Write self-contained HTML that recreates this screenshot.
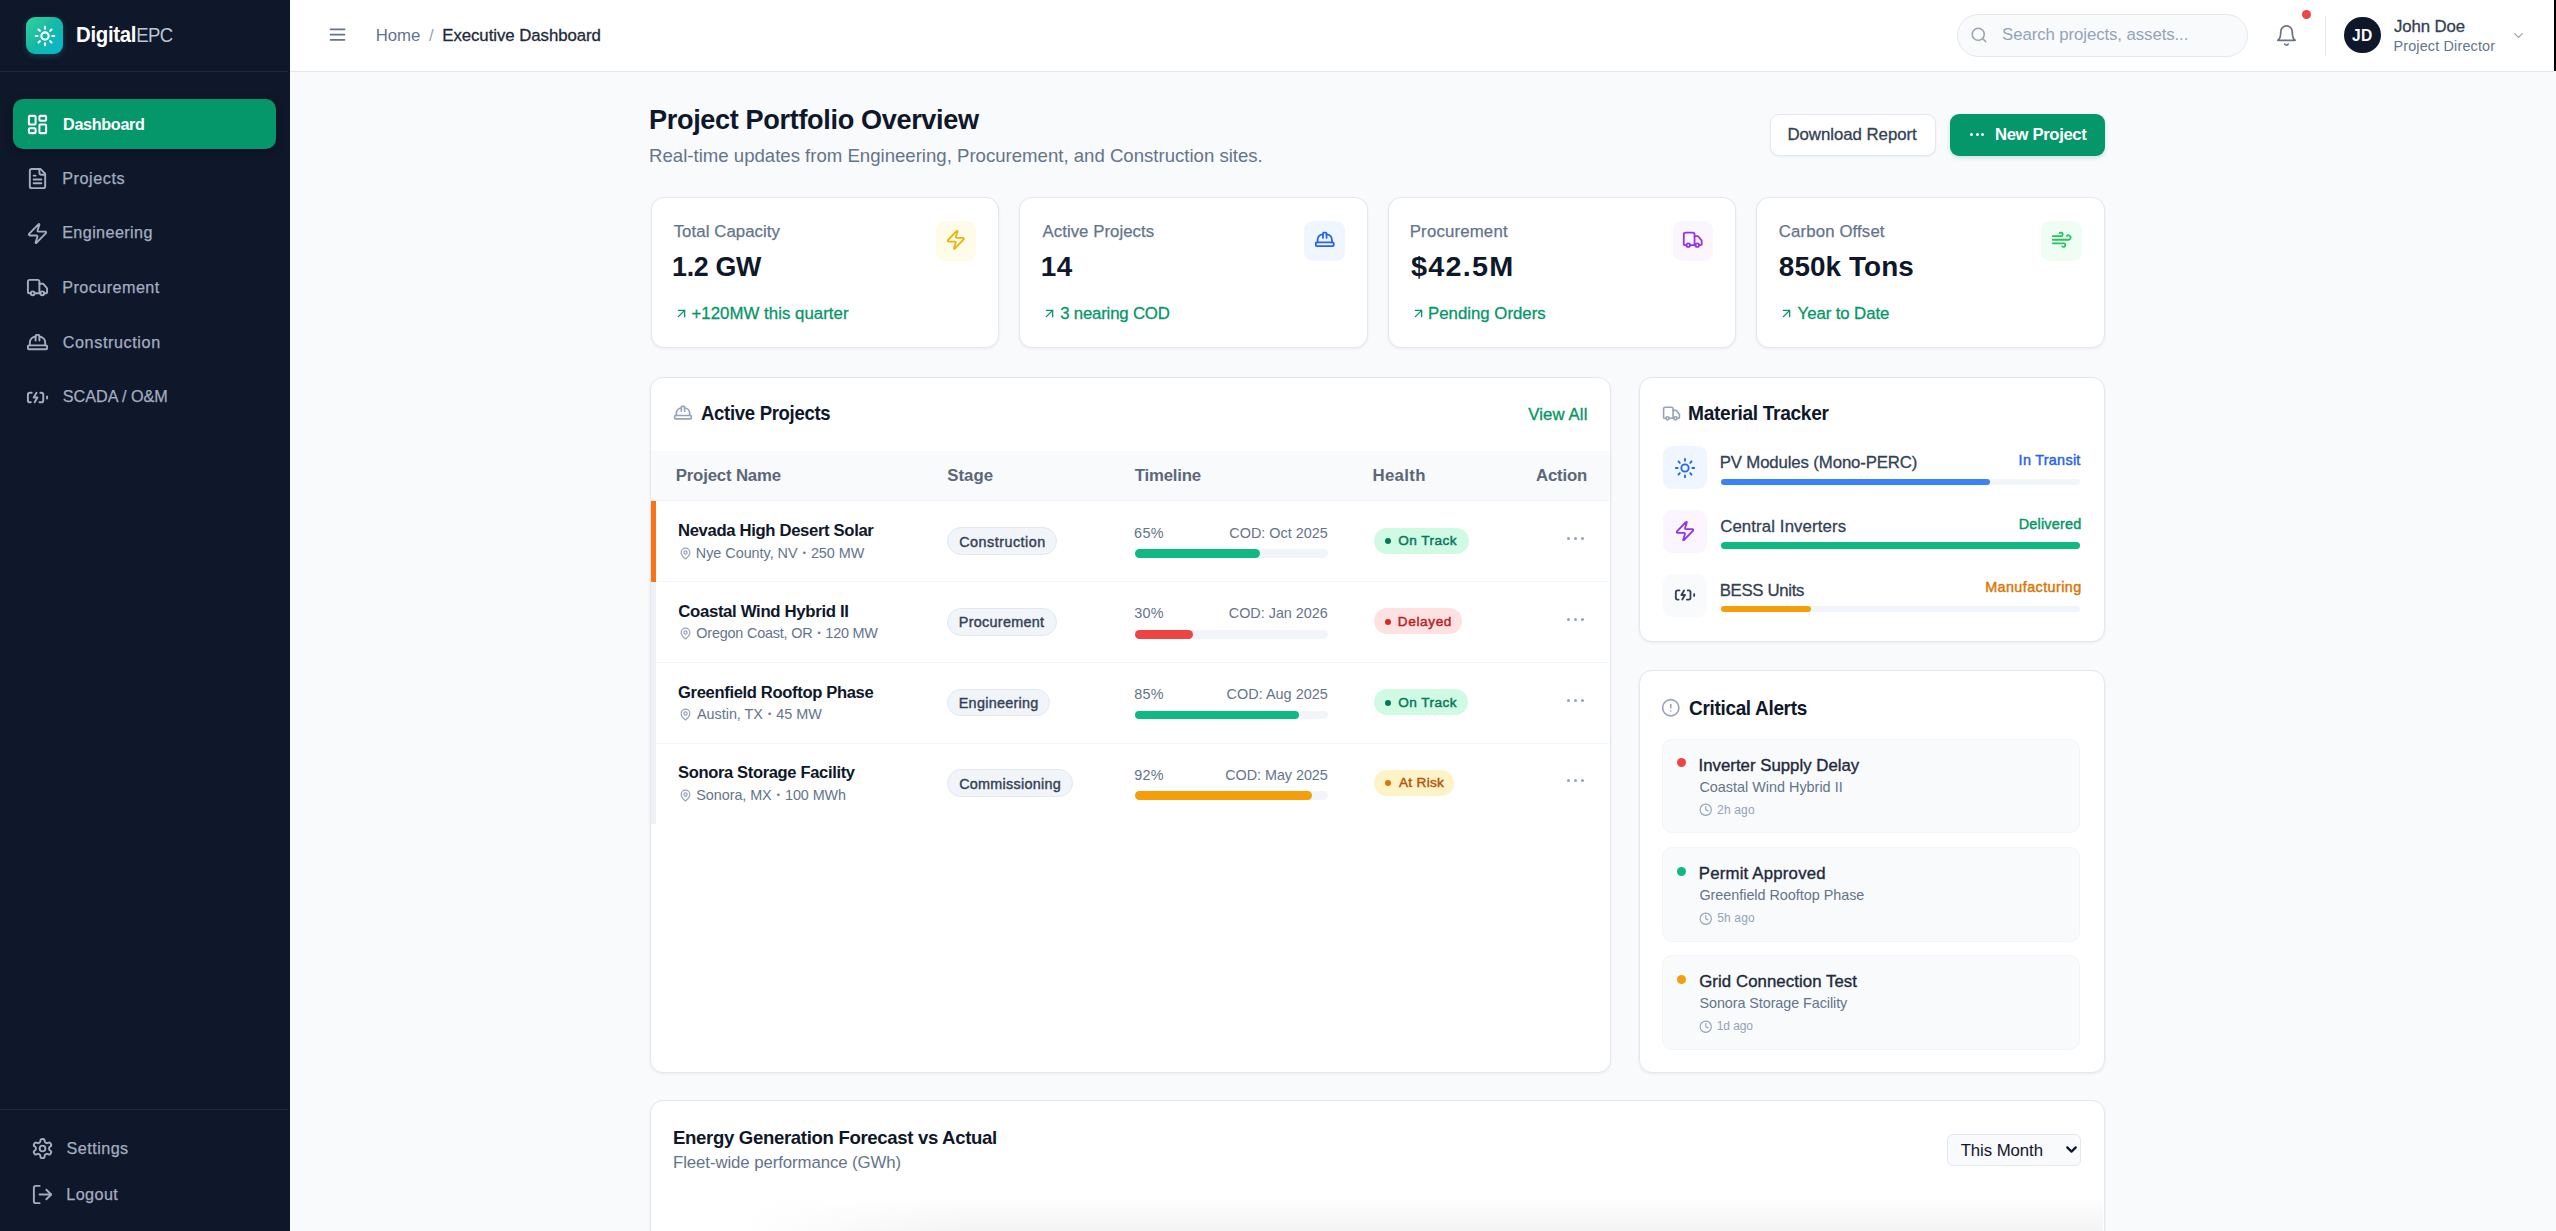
<!DOCTYPE html>
<html><head><meta charset="utf-8"><title>DigitalEPC Executive Dashboard</title>
<style>
html,body{margin:0;padding:0;}
body{width:2556px;height:1231px;overflow:hidden;position:relative;background:#f8fafc;font-family:"Liberation Sans", sans-serif;}
body>div,body>svg{position:absolute;}
.t{white-space:nowrap;line-height:1;}
</style></head><body>
<div style="left:0.00px;top:0.00px;width:290.00px;height:1231.00px;background:#0f172a"></div>
<div style="left:0.00px;top:70.50px;width:288.00px;height:1.20px;background:#1e293b"></div>
<div style="left:0.00px;top:1108.50px;width:288.00px;height:1.20px;background:#1e293b"></div>
<div style="left:26.00px;top:17.00px;width:37.00px;height:36.50px;border-radius:9px;background:linear-gradient(135deg,#34d399 0%,#14b8a6 50%,#06b6d4 100%);box-shadow:0 2px 6px rgba(20,184,166,0.25)"></div>
<svg style="left:33.50px;top:24.50px;width:22.00px;height:22.00px" viewBox="0 0 24 24" fill="none" stroke="#ffffff" stroke-width="2.3" stroke-linecap="round" stroke-linejoin="round"><circle cx="12" cy="12" r="4"/><path d="M12 2v2"/><path d="M12 20v2"/><path d="m4.93 4.93 1.41 1.41"/><path d="m17.66 17.66 1.41 1.41"/><path d="M2 12h2"/><path d="M20 12h2"/><path d="m6.34 17.66-1.41 1.41"/><path d="m19.07 4.93-1.41 1.41"/></svg>
<div class="t" style="left:75.88px;top:24px;font-size:21.90px;letter-spacing:-0.350px;color:#ffffff;font-weight:700;transform:scaleX(0.9313);transform-origin:1.42px 0;">Digital</div>
<div class="t" style="left:135.62px;top:24px;font-size:21.00px;letter-spacing:-0.600px;color:#bcc6d5;transform:scaleX(0.8827);transform-origin:1.68px 0;">EPC</div>
<div style="left:12.50px;top:99.00px;width:263.50px;height:50.00px;border-radius:10px;background:#059669;box-shadow:0 3px 8px rgba(0,0,0,0.25)"></div>
<svg style="left:26.00px;top:112.50px;width:23.00px;height:23.00px" viewBox="0 0 24 24" fill="none" stroke="#ffffff" stroke-width="2.1" stroke-linecap="round" stroke-linejoin="round"><rect x="3" y="3" width="7" height="9" rx="1"/><rect x="14" y="3" width="7" height="5" rx="1"/><rect x="14" y="12" width="7" height="9" rx="1"/><rect x="3" y="16" width="7" height="5" rx="1"/></svg>
<div class="t" style="left:62.71px;top:117px;font-size:16.80px;letter-spacing:-0.350px;color:#ffffff;font-weight:700;transform:scaleX(0.9648);transform-origin:1.09px 0;">Dashboard</div>
<svg style="left:26.00px;top:167.40px;width:23.00px;height:23.00px" viewBox="0 0 24 24" fill="none" stroke="#a3aec0" stroke-width="2" stroke-linecap="round" stroke-linejoin="round"><path d="M15 2H6a2 2 0 0 0-2 2v16a2 2 0 0 0 2 2h12a2 2 0 0 0 2-2V7Z"/><path d="M14 2v4a2 2 0 0 0 2 2h4"/><path d="M10 9H8"/><path d="M16 13H8"/><path d="M16 17H8"/></svg>
<div class="t" style="left:62.20px;top:170px;font-size:16.20px;letter-spacing:0.569px;color:#a3aec0;-webkit-text-stroke:0.25px #a3aec0">Projects</div>
<svg style="left:26.00px;top:221.90px;width:23.00px;height:23.00px" viewBox="0 0 24 24" fill="none" stroke="#a3aec0" stroke-width="2" stroke-linecap="round" stroke-linejoin="round"><path d="M4 14a1 1 0 0 1-.78-1.63l9.9-10.2a.5.5 0 0 1 .86.46l-1.92 6.02A1 1 0 0 0 13 10h7a1 1 0 0 1 .78 1.63l-9.9 10.2a.5.5 0 0 1-.86-.46l1.92-6.02A1 1 0 0 0 11 14z"/></svg>
<div class="t" style="left:62.20px;top:224px;font-size:16.20px;letter-spacing:0.382px;color:#a3aec0;-webkit-text-stroke:0.25px #a3aec0">Engineering</div>
<svg style="left:26.00px;top:276.40px;width:23.00px;height:23.00px" viewBox="0 0 24 24" fill="none" stroke="#a3aec0" stroke-width="2" stroke-linecap="round" stroke-linejoin="round"><path d="M14 18V6a2 2 0 0 0-2-2H4a2 2 0 0 0-2 2v11a1 1 0 0 0 1 1h2"/><path d="M15 18H9"/><path d="M19 18h2a1 1 0 0 0 1-1v-3.65a1 1 0 0 0-.22-.624l-3.48-4.35A1 1 0 0 0 17.52 8H14"/><circle cx="17" cy="18" r="2"/><circle cx="7" cy="18" r="2"/></svg>
<div class="t" style="left:62.20px;top:279px;font-size:16.20px;letter-spacing:0.441px;color:#a3aec0;-webkit-text-stroke:0.25px #a3aec0">Procurement</div>
<svg style="left:26.00px;top:331.00px;width:23.00px;height:23.00px" viewBox="0 0 24 24" fill="none" stroke="#a3aec0" stroke-width="2" stroke-linecap="round" stroke-linejoin="round"><path d="M10 10V5a1 1 0 0 1 1-1h2a1 1 0 0 1 1 1v5"/><path d="M14 6a6 6 0 0 1 6 6v3"/><path d="M4 15v-3a6 6 0 0 1 6-6"/><rect x="2" y="15" width="20" height="4" rx="1"/></svg>
<div class="t" style="left:62.69px;top:334px;font-size:16.20px;letter-spacing:0.600px;color:#a3aec0;-webkit-text-stroke:0.25px #a3aec0">Construction</div>
<svg style="left:26.00px;top:385.50px;width:23.00px;height:23.00px" viewBox="0 0 24 24" fill="none" stroke="#a3aec0" stroke-width="2" stroke-linecap="round" stroke-linejoin="round"><path d="M15 7h1a2 2 0 0 1 2 2v6a2 2 0 0 1-2 2h-2"/><path d="M6 7H4a2 2 0 0 0-2 2v6a2 2 0 0 0 2 2h1"/><path d="m11 7-3 5h4l-3 5"/><line x1="22" x2="22" y1="11" y2="13"/></svg>
<div class="t" style="left:62.77px;top:388px;font-size:16.20px;letter-spacing:-0.018px;color:#a3aec0;-webkit-text-stroke:0.25px #a3aec0">SCADA / O&amp;M</div>
<svg style="left:30.50px;top:1137.00px;width:23.00px;height:23.00px" viewBox="0 0 24 24" fill="none" stroke="#a3aec0" stroke-width="2" stroke-linecap="round" stroke-linejoin="round"><path d="M12.22 2h-.44a2 2 0 0 0-2 2v.18a2 2 0 0 1-1 1.73l-.43.25a2 2 0 0 1-2 0l-.15-.08a2 2 0 0 0-2.73.73l-.22.38a2 2 0 0 0 .73 2.73l.15.1a2 2 0 0 1 1 1.72v.51a2 2 0 0 1-1 1.74l-.15.09a2 2 0 0 0-.73 2.73l.22.38a2 2 0 0 0 2.73.73l.15-.08a2 2 0 0 1 2 0l.43.25a2 2 0 0 1 1 1.73V20a2 2 0 0 0 2 2h.44a2 2 0 0 0 2-2v-.18a2 2 0 0 1 1-1.73l.43-.25a2 2 0 0 1 2 0l.15.08a2 2 0 0 0 2.73-.73l.22-.39a2 2 0 0 0-.73-2.73l-.15-.08a2 2 0 0 1-1-1.74v-.5a2 2 0 0 1 1-1.74l.15-.09a2 2 0 0 0 .73-2.73l-.22-.38a2 2 0 0 0-2.73-.73l-.15.08a2 2 0 0 1-2 0l-.43-.25a2 2 0 0 1-1-1.73V4a2 2 0 0 0-2-2z"/><circle cx="12" cy="12" r="3"/></svg>
<div class="t" style="left:66.57px;top:1140px;font-size:16.20px;letter-spacing:0.448px;color:#a3aec0;-webkit-text-stroke:0.25px #a3aec0">Settings</div>
<svg style="left:31.00px;top:1182.50px;width:23.00px;height:23.00px" viewBox="0 0 24 24" fill="none" stroke="#a3aec0" stroke-width="2" stroke-linecap="round" stroke-linejoin="round"><path d="M9 21H5a2 2 0 0 1-2-2V5a2 2 0 0 1 2-2h4"/><polyline points="16 17 21 12 16 7"/><line x1="21" x2="9" y1="12" y2="12"/></svg>
<div class="t" style="left:66.30px;top:1186px;font-size:16.20px;letter-spacing:0.397px;color:#a3aec0;-webkit-text-stroke:0.25px #a3aec0">Logout</div>
<div style="left:290.00px;top:0.00px;width:2266.00px;height:70.50px;background:#ffffff"></div>
<div style="left:290.00px;top:70.50px;width:2264.00px;height:1.30px;background:#e5e7eb"></div>
<div style="left:2553.50px;top:0.00px;width:2.50px;height:71.00px;background:#000"></div>
<svg style="left:326.50px;top:24.00px;width:21.00px;height:21.00px" viewBox="0 0 24 24" fill="none" stroke="#64748b" stroke-width="2" stroke-linecap="round" stroke-linejoin="round"><line x1="4" x2="20" y1="6" y2="6"/><line x1="4" x2="20" y1="12" y2="12"/><line x1="4" x2="20" y1="18" y2="18"/></svg>
<div class="t" style="left:375.66px;top:28px;font-size:16.80px;letter-spacing:-0.024px;color:#64748b;">Home</div>
<div class="t" style="left:429.00px;top:28px;font-size:16.80px;letter-spacing:0.000px;color:#94a3b8;">/</div>
<div class="t" style="left:442.26px;top:28px;font-size:16.80px;letter-spacing:-0.047px;color:#1e293b;-webkit-text-stroke:0.3px #1e293b">Executive Dashboard</div>
<div style="left:1956.50px;top:13.80px;width:291.00px;height:42.80px;border-radius:22px;background:#f8fafc;border:1.3px solid #e5e7eb;box-sizing:border-box"></div>
<svg style="left:1970.00px;top:25.80px;width:18.00px;height:18.00px" viewBox="0 0 24 24" fill="none" stroke="#9ca3af" stroke-width="2.1" stroke-linecap="round" stroke-linejoin="round"><circle cx="11" cy="11" r="8"/><path d="m21 21-4.3-4.3"/></svg>
<div class="t" style="left:2002.04px;top:27px;font-size:16.80px;letter-spacing:-0.084px;color:#94a3b8;">Search projects, assets...</div>
<svg style="left:2274.50px;top:24.00px;width:23.00px;height:23.00px" viewBox="0 0 24 24" fill="none" stroke="#6b7280" stroke-width="1.8" stroke-linecap="round" stroke-linejoin="round"><path d="M6 8a6 6 0 0 1 12 0c0 7 3 9 3 9H3s3-2 3-9"/><path d="M10.3 21a1.94 1.94 0 0 0 3.4 0"/></svg>
<div style="left:2302.00px;top:10.20px;width:9.00px;height:9.00px;border-radius:50%;background:#ef4444;box-shadow:0 0 0 1.5px #fff"></div>
<div style="left:2325.00px;top:16.00px;width:1.20px;height:39.50px;background:#e5e7eb"></div>
<div style="left:2344.00px;top:16.80px;width:36.50px;height:36.50px;border-radius:50%;background:#0f172a"></div>
<div class="t" style="left:2352.07px;top:28px;font-size:15.60px;letter-spacing:0.268px;color:#ffffff;font-weight:700;">JD</div>
<div class="t" style="left:2393.95px;top:19px;font-size:16.80px;letter-spacing:-0.114px;color:#334155;-webkit-text-stroke:0.3px #334155">John Doe</div>
<div class="t" style="left:2393.45px;top:39px;font-size:14.40px;letter-spacing:0.163px;color:#64748b;">Project Director</div>
<svg style="left:2511.00px;top:28.00px;width:15.00px;height:15.00px" viewBox="0 0 24 24" fill="none" stroke="#9ca3af" stroke-width="2" stroke-linecap="round" stroke-linejoin="round"><path d="m6 9 6 6 6-6"/></svg>
<div class="t" style="left:649.23px;top:106px;font-size:27.20px;letter-spacing:-0.350px;color:#0f172a;font-weight:700;transform:scaleX(0.9966);transform-origin:1.77px 0;">Project Portfolio Overview</div>
<div class="t" style="left:649.11px;top:147px;font-size:18.60px;letter-spacing:-0.003px;color:#64748b;">Real-time updates from Engineering, Procurement, and Construction sites.</div>
<div style="left:1770.00px;top:113.80px;width:165.50px;height:42.40px;border-radius:9px;background:#fff;border:1.3px solid #e2e8f0;box-sizing:border-box;box-shadow:0 1px 2px rgba(0,0,0,0.05)"></div>
<div class="t" style="left:1787.46px;top:127px;font-size:16.80px;letter-spacing:-0.025px;color:#334155;-webkit-text-stroke:0.3px #334155">Download Report</div>
<div style="left:1949.80px;top:113.80px;width:155.60px;height:42.40px;border-radius:9px;background:#059669;box-shadow:0 2px 4px rgba(5,150,105,0.2)"></div>
<div style="left:1970.00px;top:133.30px;width:3.00px;height:3.00px;border-radius:50%;background:#fff"></div>
<div style="left:1975.50px;top:133.30px;width:3.00px;height:3.00px;border-radius:50%;background:#fff"></div>
<div style="left:1981.00px;top:133.30px;width:3.00px;height:3.00px;border-radius:50%;background:#fff"></div>
<div class="t" style="left:1994.91px;top:127px;font-size:16.80px;letter-spacing:-0.350px;color:#ffffff;font-weight:700;transform:scaleX(0.9919);transform-origin:1.09px 0;">New Project</div>
<div style="left:650.70px;top:196.60px;width:348.80px;height:151.80px;border-radius:13px;background:#fff;border:1.3px solid #e5e7eb;box-sizing:border-box;box-shadow:0 1px 3px rgba(15,23,42,0.06)"></div>
<div class="t" style="left:673.66px;top:224px;font-size:16.80px;letter-spacing:0.072px;color:#64748b;-webkit-text-stroke:0.25px #64748b">Total Capacity</div>
<div class="t" style="left:672.33px;top:253px;font-size:27.90px;letter-spacing:-0.350px;color:#0f172a;font-weight:700;transform:scaleX(0.9610);transform-origin:1.67px 0;">1.2 GW</div>
<svg style="left:673.70px;top:306.00px;width:15.00px;height:15.00px" viewBox="0 0 24 24" fill="none" stroke="#059669" stroke-width="2.2" stroke-linecap="round" stroke-linejoin="round"><path d="M7 7h10v10"/><path d="M7 17 17 7"/></svg>
<div class="t" style="left:691.46px;top:306px;font-size:16.80px;letter-spacing:0.048px;color:#059669;-webkit-text-stroke:0.3px #059669">+120MW this quarter</div>
<div style="left:935.70px;top:221.20px;width:40.50px;height:39.50px;border-radius:9px;background:#fefce8"></div>
<svg style="left:945.20px;top:229.30px;width:21.50px;height:21.50px" viewBox="0 0 24 24" fill="none" stroke="#eab308" stroke-width="2" stroke-linecap="round" stroke-linejoin="round"><path d="M4 14a1 1 0 0 1-.78-1.63l9.9-10.2a.5.5 0 0 1 .86.46l-1.92 6.02A1 1 0 0 0 13 10h7a1 1 0 0 1 .78 1.63l-9.9 10.2a.5.5 0 0 1-.86-.46l1.92-6.02A1 1 0 0 0 11 14z"/></svg>
<div style="left:1019.20px;top:196.60px;width:348.70px;height:151.80px;border-radius:13px;background:#fff;border:1.3px solid #e5e7eb;box-sizing:border-box;box-shadow:0 1px 3px rgba(15,23,42,0.06)"></div>
<div class="t" style="left:1042.50px;top:224px;font-size:16.80px;letter-spacing:0.047px;color:#64748b;-webkit-text-stroke:0.25px #64748b">Active Projects</div>
<div class="t" style="left:1040.83px;top:253px;font-size:27.90px;letter-spacing:0.345px;color:#0f172a;font-weight:700;">14</div>
<svg style="left:1042.20px;top:306.00px;width:15.00px;height:15.00px" viewBox="0 0 24 24" fill="none" stroke="#059669" stroke-width="2.2" stroke-linecap="round" stroke-linejoin="round"><path d="M7 7h10v10"/><path d="M7 17 17 7"/></svg>
<div class="t" style="left:1060.13px;top:306px;font-size:16.80px;letter-spacing:-0.186px;color:#059669;-webkit-text-stroke:0.3px #059669">3 nearing COD</div>
<div style="left:1304.20px;top:221.20px;width:40.50px;height:39.50px;border-radius:9px;background:#eff6ff"></div>
<svg style="left:1313.70px;top:229.30px;width:21.50px;height:21.50px" viewBox="0 0 24 24" fill="none" stroke="#2563eb" stroke-width="2" stroke-linecap="round" stroke-linejoin="round"><path d="M10 10V5a1 1 0 0 1 1-1h2a1 1 0 0 1 1 1v5"/><path d="M14 6a6 6 0 0 1 6 6v3"/><path d="M4 15v-3a6 6 0 0 1 6-6"/><rect x="2" y="15" width="20" height="4" rx="1"/></svg>
<div style="left:1387.80px;top:196.60px;width:348.40px;height:151.80px;border-radius:13px;background:#fff;border:1.3px solid #e5e7eb;box-sizing:border-box;box-shadow:0 1px 3px rgba(15,23,42,0.06)"></div>
<div class="t" style="left:1409.76px;top:224px;font-size:16.80px;letter-spacing:0.173px;color:#64748b;-webkit-text-stroke:0.25px #64748b">Procurement</div>
<div class="t" style="left:1410.68px;top:253px;font-size:27.90px;letter-spacing:1.200px;color:#0f172a;font-weight:700;transform:scaleX(1.0329);transform-origin:0.42px 0;">$42.5M</div>
<svg style="left:1410.80px;top:306.00px;width:15.00px;height:15.00px" viewBox="0 0 24 24" fill="none" stroke="#059669" stroke-width="2.2" stroke-linecap="round" stroke-linejoin="round"><path d="M7 7h10v10"/><path d="M7 17 17 7"/></svg>
<div class="t" style="left:1428.06px;top:306px;font-size:16.80px;letter-spacing:0.004px;color:#059669;-webkit-text-stroke:0.3px #059669">Pending Orders</div>
<div style="left:1672.80px;top:221.20px;width:40.50px;height:39.50px;border-radius:9px;background:#faf5ff"></div>
<svg style="left:1682.30px;top:229.30px;width:21.50px;height:21.50px" viewBox="0 0 24 24" fill="none" stroke="#9333ea" stroke-width="2" stroke-linecap="round" stroke-linejoin="round"><path d="M14 18V6a2 2 0 0 0-2-2H4a2 2 0 0 0-2 2v11a1 1 0 0 0 1 1h2"/><path d="M15 18H9"/><path d="M19 18h2a1 1 0 0 0 1-1v-3.65a1 1 0 0 0-.22-.624l-3.48-4.35A1 1 0 0 0 17.52 8H14"/><circle cx="17" cy="18" r="2"/><circle cx="7" cy="18" r="2"/></svg>
<div style="left:1756.40px;top:196.60px;width:348.20px;height:151.80px;border-radius:13px;background:#fff;border:1.3px solid #e5e7eb;box-sizing:border-box;box-shadow:0 1px 3px rgba(15,23,42,0.06)"></div>
<div class="t" style="left:1778.86px;top:224px;font-size:16.80px;letter-spacing:0.123px;color:#64748b;-webkit-text-stroke:0.25px #64748b">Carbon Offset</div>
<div class="t" style="left:1778.86px;top:253px;font-size:27.90px;letter-spacing:0.077px;color:#0f172a;font-weight:700;">850k Tons</div>
<svg style="left:1779.40px;top:306.00px;width:15.00px;height:15.00px" viewBox="0 0 24 24" fill="none" stroke="#059669" stroke-width="2.2" stroke-linecap="round" stroke-linejoin="round"><path d="M7 7h10v10"/><path d="M7 17 17 7"/></svg>
<div class="t" style="left:1797.58px;top:306px;font-size:16.80px;letter-spacing:-0.087px;color:#059669;-webkit-text-stroke:0.3px #059669">Year to Date</div>
<div style="left:2041.40px;top:221.20px;width:40.50px;height:39.50px;border-radius:9px;background:#f0fdf4"></div>
<svg style="left:2050.90px;top:229.30px;width:21.50px;height:21.50px" viewBox="0 0 24 24" fill="none" stroke="#22c55e" stroke-width="2" stroke-linecap="round" stroke-linejoin="round"><path d="M17.7 7.7a2.5 2.5 0 1 1 1.8 4.3H2"/><path d="M9.6 4.6A2 2 0 1 1 11 8H2"/><path d="M12.6 19.4A2 2 0 1 0 14 16H2"/></svg>
<div style="left:650.00px;top:376.60px;width:960.80px;height:696.00px;border-radius:13px;background:#fff;border:1.3px solid #e5e7eb;box-sizing:border-box;box-shadow:0 1px 3px rgba(15,23,42,0.06)"></div>
<svg style="left:673.00px;top:402.50px;width:20.00px;height:20.00px" viewBox="0 0 24 24" fill="none" stroke="#94a3b8" stroke-width="2" stroke-linecap="round" stroke-linejoin="round"><path d="M10 10V5a1 1 0 0 1 1-1h2a1 1 0 0 1 1 1v5"/><path d="M14 6a6 6 0 0 1 6 6v3"/><path d="M4 15v-3a6 6 0 0 1 6-6"/><rect x="2" y="15" width="20" height="4" rx="1"/></svg>
<div class="t" style="left:700.79px;top:403px;font-size:20.40px;letter-spacing:-0.350px;color:#0f172a;font-weight:700;transform:scaleX(0.9096);transform-origin:0.51px 0;">Active Projects</div>
<div class="t" style="left:1528.22px;top:407px;font-size:16.80px;letter-spacing:0.102px;color:#059669;-webkit-text-stroke:0.35px #059669">View All</div>
<div style="left:651.30px;top:450.60px;width:958.20px;height:50.40px;background:#f8fafc;border-bottom:1.2px solid #eef2f6;box-sizing:border-box"></div>
<div class="t" style="left:675.71px;top:468px;font-size:16.80px;letter-spacing:-0.170px;color:#5b6779;font-weight:700;">Project Name</div>
<div class="t" style="left:947.20px;top:468px;font-size:16.80px;letter-spacing:0.049px;color:#5b6779;font-weight:700;">Stage</div>
<div class="t" style="left:1134.83px;top:468px;font-size:16.80px;letter-spacing:-0.219px;color:#5b6779;font-weight:700;">Timeline</div>
<div class="t" style="left:1372.51px;top:468px;font-size:16.80px;letter-spacing:0.335px;color:#5b6779;font-weight:700;">Health</div>
<div class="t" style="left:1535.98px;top:468px;font-size:16.80px;letter-spacing:-0.184px;color:#5b6779;font-weight:700;">Action</div>
<div style="left:651.30px;top:581.10px;width:958.20px;height:1.20px;background:#f1f5f9"></div>
<div style="left:651.30px;top:501.00px;width:5.00px;height:80.70px;background:#f97316"></div>
<div class="t" style="left:677.81px;top:523px;font-size:16.80px;letter-spacing:-0.350px;color:#0f172a;font-weight:700;transform:scaleX(0.9935);transform-origin:1.09px 0;">Nevada High Desert Solar</div>
<svg style="left:679.00px;top:546.50px;width:13.00px;height:13.00px" viewBox="0 0 24 24" fill="none" stroke="#94a3b8" stroke-width="2.2" stroke-linecap="round" stroke-linejoin="round"><path d="M20 10c0 4.993-5.539 10.193-7.399 11.799a1 1 0 0 1-1.202 0C9.539 20.193 4 14.993 4 10a8 8 0 0 1 16 0"/><circle cx="12" cy="10" r="3"/></svg>
<div class="t" style="left:695.85px;top:546px;font-size:14.40px;letter-spacing:-0.033px;color:#64748b;">Nye County, NV <span style="font-size:62%;position:relative;top:-2px;margin:0 1.2px">•</span> 250 MW</div>
<div style="left:946.90px;top:527.30px;width:110.10px;height:27.80px;border-radius:14px;background:#f1f5f9;border:1.2px solid #e2e8f0;box-sizing:border-box"></div>
<div class="t" style="left:959.18px;top:535px;font-size:14.40px;letter-spacing:0.482px;color:#334155;-webkit-text-stroke:0.4px #334155">Construction</div>
<div class="t" style="left:1134.08px;top:526px;font-size:14.40px;letter-spacing:0.312px;color:#64748b;">65%</div>
<div class="t" style="left:1229.28px;top:526px;font-size:14.40px;letter-spacing:0.014px;color:#64748b;">COD: Oct 2025</div>
<div style="left:1134.60px;top:549.20px;width:193.20px;height:8.70px;border-radius:5px;background:#f1f5f9"></div>
<div style="left:1134.60px;top:549.20px;width:125.58px;height:8.70px;border-radius:5px;background:#10b981"></div>
<div style="left:1373.60px;top:527.60px;width:95.00px;height:26.10px;border-radius:13px;background:#d1fae5"></div>
<div style="left:1384.80px;top:538.10px;width:6.30px;height:6.30px;border-radius:50%;background:#047857"></div>
<div class="t" style="left:1398.29px;top:534px;font-size:13.60px;letter-spacing:0.452px;color:#047857;-webkit-text-stroke:0.45px #047857">On Track</div>
<div style="left:1567.00px;top:537.20px;width:3.00px;height:3.00px;border-radius:50%;background:#94a3b8"></div>
<div style="left:1574.00px;top:537.20px;width:3.00px;height:3.00px;border-radius:50%;background:#94a3b8"></div>
<div style="left:1581.00px;top:537.20px;width:3.00px;height:3.00px;border-radius:50%;background:#94a3b8"></div>
<div style="left:651.30px;top:661.80px;width:958.20px;height:1.20px;background:#f1f5f9"></div>
<div style="left:651.30px;top:581.70px;width:5.00px;height:80.70px;background:#eef2f7"></div>
<div class="t" style="left:678.23px;top:604px;font-size:16.80px;letter-spacing:-0.344px;color:#0f172a;font-weight:700;">Coastal Wind Hybrid II</div>
<svg style="left:679.00px;top:627.20px;width:13.00px;height:13.00px" viewBox="0 0 24 24" fill="none" stroke="#94a3b8" stroke-width="2.2" stroke-linecap="round" stroke-linejoin="round"><path d="M20 10c0 4.993-5.539 10.193-7.399 11.799a1 1 0 0 1-1.202 0C9.539 20.193 4 14.993 4 10a8 8 0 0 1 16 0"/><circle cx="12" cy="10" r="3"/></svg>
<div class="t" style="left:696.35px;top:626px;font-size:14.40px;letter-spacing:-0.195px;color:#64748b;">Oregon Coast, OR <span style="font-size:62%;position:relative;top:-2px;margin:0 1.2px">•</span> 120 MW</div>
<div style="left:946.90px;top:608.00px;width:110.20px;height:27.80px;border-radius:14px;background:#f1f5f9;border:1.2px solid #e2e8f0;box-sizing:border-box"></div>
<div class="t" style="left:958.75px;top:615px;font-size:14.40px;letter-spacing:0.296px;color:#334155;-webkit-text-stroke:0.4px #334155">Procurement</div>
<div class="t" style="left:1134.22px;top:606px;font-size:14.40px;letter-spacing:0.240px;color:#64748b;">30%</div>
<div class="t" style="left:1228.78px;top:606px;font-size:14.40px;letter-spacing:-0.010px;color:#64748b;">COD: Jan 2026</div>
<div style="left:1134.60px;top:629.90px;width:193.20px;height:8.70px;border-radius:5px;background:#f1f5f9"></div>
<div style="left:1134.60px;top:629.90px;width:57.96px;height:8.70px;border-radius:5px;background:#ef4444"></div>
<div style="left:1373.60px;top:608.30px;width:88.50px;height:26.10px;border-radius:13px;background:#fee2e2"></div>
<div style="left:1384.80px;top:618.80px;width:6.30px;height:6.30px;border-radius:50%;background:#dc2626"></div>
<div class="t" style="left:1397.81px;top:615px;font-size:13.60px;letter-spacing:0.627px;color:#b91c1c;-webkit-text-stroke:0.45px #b91c1c">Delayed</div>
<div style="left:1567.00px;top:617.90px;width:3.00px;height:3.00px;border-radius:50%;background:#94a3b8"></div>
<div style="left:1574.00px;top:617.90px;width:3.00px;height:3.00px;border-radius:50%;background:#94a3b8"></div>
<div style="left:1581.00px;top:617.90px;width:3.00px;height:3.00px;border-radius:50%;background:#94a3b8"></div>
<div style="left:651.30px;top:742.50px;width:958.20px;height:1.20px;background:#f1f5f9"></div>
<div style="left:651.30px;top:662.40px;width:5.00px;height:80.70px;background:#eef2f7"></div>
<div class="t" style="left:678.23px;top:685px;font-size:16.80px;letter-spacing:-0.350px;color:#0f172a;font-weight:700;transform:scaleX(0.9884);transform-origin:0.67px 0;">Greenfield Rooftop Phase</div>
<svg style="left:679.00px;top:707.90px;width:13.00px;height:13.00px" viewBox="0 0 24 24" fill="none" stroke="#94a3b8" stroke-width="2.2" stroke-linecap="round" stroke-linejoin="round"><path d="M20 10c0 4.993-5.539 10.193-7.399 11.799a1 1 0 0 1-1.202 0C9.539 20.193 4 14.993 4 10a8 8 0 0 1 16 0"/><circle cx="12" cy="10" r="3"/></svg>
<div class="t" style="left:697.00px;top:707px;font-size:14.40px;letter-spacing:-0.022px;color:#64748b;">Austin, TX <span style="font-size:62%;position:relative;top:-2px;margin:0 1.2px">•</span> 45 MW</div>
<div style="left:946.90px;top:688.70px;width:103.30px;height:27.80px;border-radius:14px;background:#f1f5f9;border:1.2px solid #e2e8f0;box-sizing:border-box"></div>
<div class="t" style="left:958.75px;top:696px;font-size:14.40px;letter-spacing:0.276px;color:#334155;-webkit-text-stroke:0.4px #334155">Engineering</div>
<div class="t" style="left:1134.15px;top:687px;font-size:14.40px;letter-spacing:0.276px;color:#64748b;">85%</div>
<div class="t" style="left:1226.58px;top:687px;font-size:14.40px;letter-spacing:0.035px;color:#64748b;">COD: Aug 2025</div>
<div style="left:1134.60px;top:710.60px;width:193.20px;height:8.70px;border-radius:5px;background:#f1f5f9"></div>
<div style="left:1134.60px;top:710.60px;width:164.22px;height:8.70px;border-radius:5px;background:#10b981"></div>
<div style="left:1373.60px;top:689.00px;width:94.00px;height:26.10px;border-radius:13px;background:#d1fae5"></div>
<div style="left:1384.80px;top:699.50px;width:6.30px;height:6.30px;border-radius:50%;background:#047857"></div>
<div class="t" style="left:1398.29px;top:696px;font-size:13.60px;letter-spacing:0.452px;color:#047857;-webkit-text-stroke:0.45px #047857">On Track</div>
<div style="left:1567.00px;top:698.60px;width:3.00px;height:3.00px;border-radius:50%;background:#94a3b8"></div>
<div style="left:1574.00px;top:698.60px;width:3.00px;height:3.00px;border-radius:50%;background:#94a3b8"></div>
<div style="left:1581.00px;top:698.60px;width:3.00px;height:3.00px;border-radius:50%;background:#94a3b8"></div>
<div style="left:651.30px;top:743.10px;width:5.00px;height:80.70px;background:#eef2f7"></div>
<div class="t" style="left:678.40px;top:765px;font-size:16.80px;letter-spacing:-0.350px;color:#0f172a;font-weight:700;transform:scaleX(0.9846);transform-origin:0.50px 0;">Sonora Storage Facility</div>
<svg style="left:679.00px;top:788.60px;width:13.00px;height:13.00px" viewBox="0 0 24 24" fill="none" stroke="#94a3b8" stroke-width="2.2" stroke-linecap="round" stroke-linejoin="round"><path d="M20 10c0 4.993-5.539 10.193-7.399 11.799a1 1 0 0 1-1.202 0C9.539 20.193 4 14.993 4 10a8 8 0 0 1 16 0"/><circle cx="12" cy="10" r="3"/></svg>
<div class="t" style="left:696.35px;top:788px;font-size:14.40px;letter-spacing:-0.069px;color:#64748b;">Sonora, MX <span style="font-size:62%;position:relative;top:-2px;margin:0 1.2px">•</span> 100 MWh</div>
<div style="left:946.90px;top:769.40px;width:126.10px;height:27.80px;border-radius:14px;background:#f1f5f9;border:1.2px solid #e2e8f0;box-sizing:border-box"></div>
<div class="t" style="left:959.18px;top:777px;font-size:14.40px;letter-spacing:0.269px;color:#334155;-webkit-text-stroke:0.4px #334155">Commissioning</div>
<div class="t" style="left:1134.15px;top:768px;font-size:14.40px;letter-spacing:0.276px;color:#64748b;">92%</div>
<div class="t" style="left:1225.28px;top:768px;font-size:14.40px;letter-spacing:-0.054px;color:#64748b;">COD: May 2025</div>
<div style="left:1134.60px;top:791.30px;width:193.20px;height:8.70px;border-radius:5px;background:#f1f5f9"></div>
<div style="left:1134.60px;top:791.30px;width:177.74px;height:8.70px;border-radius:5px;background:#f59e0b"></div>
<div style="left:1373.60px;top:769.70px;width:80.30px;height:26.10px;border-radius:13px;background:#fef3c7"></div>
<div style="left:1384.80px;top:780.20px;width:6.30px;height:6.30px;border-radius:50%;background:#d97706"></div>
<div class="t" style="left:1398.90px;top:776px;font-size:13.60px;letter-spacing:0.326px;color:#b45309;-webkit-text-stroke:0.45px #b45309">At Risk</div>
<div style="left:1567.00px;top:779.30px;width:3.00px;height:3.00px;border-radius:50%;background:#94a3b8"></div>
<div style="left:1574.00px;top:779.30px;width:3.00px;height:3.00px;border-radius:50%;background:#94a3b8"></div>
<div style="left:1581.00px;top:779.30px;width:3.00px;height:3.00px;border-radius:50%;background:#94a3b8"></div>
<div style="left:1638.50px;top:376.60px;width:466.00px;height:265.40px;border-radius:13px;background:#fff;border:1.3px solid #e5e7eb;box-sizing:border-box;box-shadow:0 1px 3px rgba(15,23,42,0.06)"></div>
<svg style="left:1661.50px;top:404.00px;width:19.00px;height:19.00px" viewBox="0 0 24 24" fill="none" stroke="#94a3b8" stroke-width="2" stroke-linecap="round" stroke-linejoin="round"><path d="M14 18V6a2 2 0 0 0-2-2H4a2 2 0 0 0-2 2v11a1 1 0 0 0 1 1h2"/><path d="M15 18H9"/><path d="M19 18h2a1 1 0 0 0 1-1v-3.65a1 1 0 0 0-.22-.624l-3.48-4.35A1 1 0 0 0 17.52 8H14"/><circle cx="17" cy="18" r="2"/><circle cx="7" cy="18" r="2"/></svg>
<div class="t" style="left:1688.27px;top:403px;font-size:20.40px;letter-spacing:-0.350px;color:#0f172a;font-weight:700;transform:scaleX(0.9389);transform-origin:1.33px 0;">Material Tracker</div>
<div style="left:1663.00px;top:446.20px;width:44.30px;height:43.20px;border-radius:9px;background:#eff6ff"></div>
<svg style="left:1674.00px;top:456.50px;width:22.00px;height:22.00px" viewBox="0 0 24 24" fill="none" stroke="#2563eb" stroke-width="2" stroke-linecap="round" stroke-linejoin="round"><circle cx="12" cy="12" r="4"/><path d="M12 2v2"/><path d="M12 20v2"/><path d="m4.93 4.93 1.41 1.41"/><path d="m17.66 17.66 1.41 1.41"/><path d="M2 12h2"/><path d="M20 12h2"/><path d="m6.34 17.66-1.41 1.41"/><path d="m19.07 4.93-1.41 1.41"/></svg>
<div class="t" style="left:1719.66px;top:455px;font-size:16.80px;letter-spacing:-0.130px;color:#334155;-webkit-text-stroke:0.3px #334155">PV Modules (Mono-PERC)</div>
<div class="t" style="left:2018.60px;top:453px;font-size:14.40px;letter-spacing:0.287px;color:#2563eb;-webkit-text-stroke:0.45px #2563eb">In Transit</div>
<div style="left:1721.00px;top:478.70px;width:359.00px;height:6.20px;border-radius:4px;background:#f1f5f9"></div>
<div style="left:1721.00px;top:478.70px;width:269.25px;height:6.20px;border-radius:4px;background:#3b82f6"></div>
<div style="left:1663.00px;top:509.90px;width:44.30px;height:43.20px;border-radius:9px;background:#faf5ff"></div>
<svg style="left:1674.00px;top:520.20px;width:22.00px;height:22.00px" viewBox="0 0 24 24" fill="none" stroke="#9333ea" stroke-width="2" stroke-linecap="round" stroke-linejoin="round"><path d="M4 14a1 1 0 0 1-.78-1.63l9.9-10.2a.5.5 0 0 1 .86.46l-1.92 6.02A1 1 0 0 0 13 10h7a1 1 0 0 1 .78 1.63l-9.9 10.2a.5.5 0 0 1-.86-.46l1.92-6.02A1 1 0 0 0 11 14z"/></svg>
<div class="t" style="left:1720.16px;top:519px;font-size:16.80px;letter-spacing:0.117px;color:#334155;-webkit-text-stroke:0.3px #334155">Central Inverters</div>
<div class="t" style="left:2018.65px;top:517px;font-size:14.40px;letter-spacing:0.219px;color:#059669;-webkit-text-stroke:0.45px #059669">Delivered</div>
<div style="left:1721.00px;top:542.40px;width:359.00px;height:6.20px;border-radius:4px;background:#f1f5f9"></div>
<div style="left:1721.00px;top:542.40px;width:359.00px;height:6.20px;border-radius:4px;background:#10b981"></div>
<div style="left:1663.00px;top:573.60px;width:44.30px;height:43.20px;border-radius:9px;background:#f8fafc"></div>
<svg style="left:1674.00px;top:583.90px;width:22.00px;height:22.00px" viewBox="0 0 24 24" fill="none" stroke="#334155" stroke-width="2" stroke-linecap="round" stroke-linejoin="round"><path d="M15 7h1a2 2 0 0 1 2 2v6a2 2 0 0 1-2 2h-2"/><path d="M6 7H4a2 2 0 0 0-2 2v6a2 2 0 0 0 2 2h1"/><path d="m11 7-3 5h4l-3 5"/><line x1="22" x2="22" y1="11" y2="13"/></svg>
<div class="t" style="left:1719.66px;top:583px;font-size:16.80px;letter-spacing:-0.316px;color:#334155;-webkit-text-stroke:0.3px #334155">BESS Units</div>
<div class="t" style="left:1985.15px;top:580px;font-size:14.40px;letter-spacing:0.405px;color:#d97706;-webkit-text-stroke:0.45px #d97706">Manufacturing</div>
<div style="left:1721.00px;top:606.10px;width:359.00px;height:6.20px;border-radius:4px;background:#f1f5f9"></div>
<div style="left:1721.00px;top:606.10px;width:89.75px;height:6.20px;border-radius:4px;background:#f59e0b"></div>
<div style="left:1638.50px;top:670.20px;width:466.00px;height:402.60px;border-radius:13px;background:#fff;border:1.3px solid #e5e7eb;box-sizing:border-box;box-shadow:0 1px 3px rgba(15,23,42,0.06)"></div>
<svg style="left:1661.00px;top:698.00px;width:19.50px;height:19.50px" viewBox="0 0 24 24" fill="none" stroke="#94a3b8" stroke-width="2" stroke-linecap="round" stroke-linejoin="round"><circle cx="12" cy="12" r="10"/><line x1="12" x2="12" y1="8" y2="12"/><line x1="12" x2="12.01" y1="16" y2="16"/></svg>
<div class="t" style="left:1688.88px;top:698px;font-size:20.40px;letter-spacing:-0.350px;color:#0f172a;font-weight:700;transform:scaleX(0.9310);transform-origin:0.82px 0;">Critical Alerts</div>
<div style="left:1662.40px;top:738.50px;width:418.00px;height:94.80px;border-radius:10px;background:#f8fafc;border:1.2px solid #f1f5f9;box-sizing:border-box"></div>
<div style="left:1676.70px;top:758.20px;width:9.30px;height:9.30px;border-radius:50%;background:#ef4444"></div>
<div class="t" style="left:1698.59px;top:758px;font-size:16.80px;letter-spacing:0.010px;color:#1e293b;-webkit-text-stroke:0.35px #1e293b">Inverter Supply Delay</div>
<div class="t" style="left:1699.38px;top:780px;font-size:14.40px;letter-spacing:0.005px;color:#64748b;">Coastal Wind Hybrid II</div>
<svg style="left:1699.30px;top:803.40px;width:13.50px;height:13.50px" viewBox="0 0 24 24" fill="none" stroke="#94a3b8" stroke-width="2" stroke-linecap="round" stroke-linejoin="round"><circle cx="12" cy="12" r="10"/><polyline points="12 6 12 12 16 14"/></svg>
<div class="t" style="left:1717.10px;top:804px;font-size:12.00px;letter-spacing:0.152px;color:#94a3b8;">2h ago</div>
<div style="left:1662.40px;top:846.80px;width:418.00px;height:94.80px;border-radius:10px;background:#f8fafc;border:1.2px solid #f1f5f9;box-sizing:border-box"></div>
<div style="left:1676.70px;top:866.50px;width:9.30px;height:9.30px;border-radius:50%;background:#10b981"></div>
<div class="t" style="left:1698.76px;top:866px;font-size:16.80px;letter-spacing:0.199px;color:#1e293b;-webkit-text-stroke:0.35px #1e293b">Permit Approved</div>
<div class="t" style="left:1699.38px;top:888px;font-size:14.40px;letter-spacing:-0.026px;color:#64748b;">Greenfield Rooftop Phase</div>
<svg style="left:1699.30px;top:911.70px;width:13.50px;height:13.50px" viewBox="0 0 24 24" fill="none" stroke="#94a3b8" stroke-width="2" stroke-linecap="round" stroke-linejoin="round"><circle cx="12" cy="12" r="10"/><polyline points="12 6 12 12 16 14"/></svg>
<div class="t" style="left:1717.22px;top:912px;font-size:12.00px;letter-spacing:0.148px;color:#94a3b8;">5h ago</div>
<div style="left:1662.40px;top:955.10px;width:418.00px;height:94.80px;border-radius:10px;background:#f8fafc;border:1.2px solid #f1f5f9;box-sizing:border-box"></div>
<div style="left:1676.70px;top:974.80px;width:9.30px;height:9.30px;border-radius:50%;background:#f59e0b"></div>
<div class="t" style="left:1699.26px;top:974px;font-size:16.80px;letter-spacing:0.070px;color:#1e293b;-webkit-text-stroke:0.35px #1e293b">Grid Connection Test</div>
<div class="t" style="left:1699.45px;top:996px;font-size:14.40px;letter-spacing:-0.079px;color:#64748b;">Sonora Storage Facility</div>
<svg style="left:1699.30px;top:1020.00px;width:13.50px;height:13.50px" viewBox="0 0 24 24" fill="none" stroke="#94a3b8" stroke-width="2" stroke-linecap="round" stroke-linejoin="round"><circle cx="12" cy="12" r="10"/><polyline points="12 6 12 12 16 14"/></svg>
<div class="t" style="left:1716.80px;top:1020px;font-size:12.00px;letter-spacing:-0.108px;color:#94a3b8;">1d ago</div>
<div style="left:650.40px;top:1100.40px;width:1454.60px;height:200.00px;border-radius:13px;background:#fff;border:1.3px solid #e5e7eb;box-sizing:border-box;box-shadow:0 1px 3px rgba(15,23,42,0.06)"></div>
<div class="t" style="left:673.16px;top:1128px;font-size:19.00px;letter-spacing:-0.350px;color:#0f172a;font-weight:700;transform:scaleX(0.9787);transform-origin:1.24px 0;">Energy Generation Forecast vs Actual</div>
<div class="t" style="left:673.06px;top:1155px;font-size:16.80px;letter-spacing:-0.086px;color:#64748b;">Fleet-wide performance (GWh)</div>
<div style="left:1946.90px;top:1133.70px;width:133.80px;height:32.10px;border-radius:6px;background:#f8fafc;border:1.3px solid #e2e8f0;box-sizing:border-box"></div>
<div class="t" style="left:1960.66px;top:1143px;font-size:16.80px;letter-spacing:-0.072px;color:#0f172a;">This Month</div>
<svg style="left:2063.00px;top:1141.00px;width:17.00px;height:17.00px" viewBox="0 0 24 24" fill="none" stroke="#0f172a" stroke-width="3.2" stroke-linecap="round" stroke-linejoin="round"><path d="m6 9 6 6 6-6"/></svg>
<div style="left:652.00px;top:1196.00px;width:1451.00px;height:35.00px;background:linear-gradient(to right,rgba(255,255,255,1) 0%,rgba(255,255,255,1) 6%,rgba(255,255,255,0) 22%,rgba(255,255,255,0) 100%),linear-gradient(to bottom,rgba(255,255,255,0) 0%,rgba(236,236,238,0.6) 100%)"></div>
</body></html>
